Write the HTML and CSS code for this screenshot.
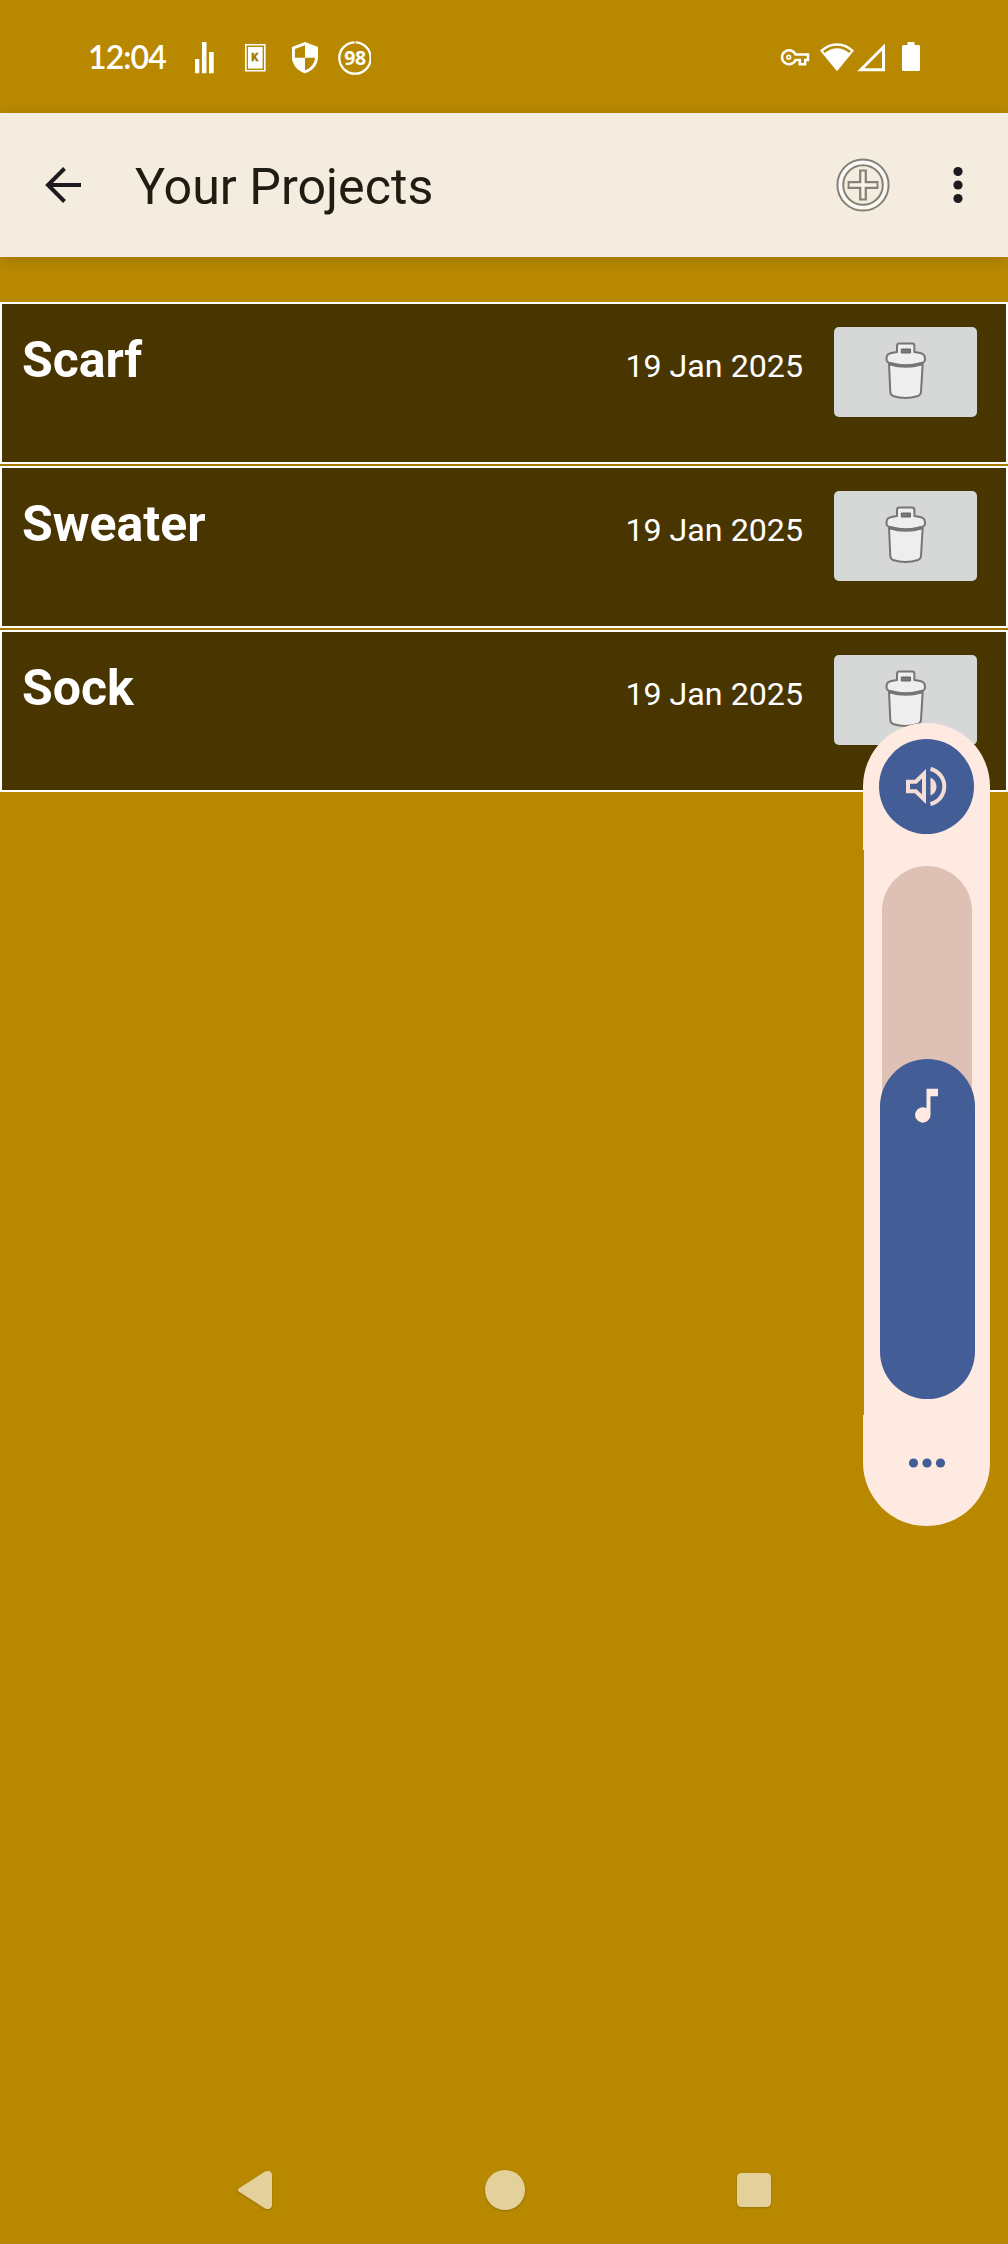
FILE: index.html
```html
<!DOCTYPE html>
<html lang="en">
<head>
<meta charset="utf-8">
<title>Your Projects</title>
<link rel="stylesheet" href="styles.css">
</head>
<body>
<svg class="defs" width="0" height="0">
  <symbol id="trash" viewBox="0 0 42 58">
    <g fill="#eee" stroke="#757575" stroke-width="2" stroke-linejoin="round">
      <path d="M4 22L5.300 50Q5.500 53 8 54Q20.500 58 33 54Q35.700 53 36 50L37.700 22Q20.500 26 4 22Z"/>
      <path d="M12 10V4Q12 1.600 14.400 1.600H27Q29.400 1.600 29.400 4V10Q36 10.700 38.500 12.500Q40.300 14 39.900 18.500Q39.500 20 37 21Q21 26 4.500 21Q2 20 1.700 18.500Q1 14 3 12.500Q5.500 10.700 12 10Z"/>
      <path d="M4.500 21.600Q21 26.500 37 21.600" fill="none" stroke-width="3.200"/>
    </g>
    <path d="M16.300 7H25.500V11H16.300Z" fill="#777" stroke="#666"/>
  </symbol>
</svg>
<div class="screen">
  <header class="status">
    <span class="clock">12:04</span>
    <svg class="notices" width="176" height="36" viewBox="195 40 176 36">
      <path fill="#fff" d="M195 59h4.300v14.300H195zM202 42h4.500v31.300H202zM209 52h4.700v21.300H209z"/>
      <path fill="none" stroke="#fff" stroke-width="1.600" d="M245.800 44.800h19v26h-19z"/>
      <path fill="#fff" d="M248 47h14.600v21.600H248z"/>
      <text class="key-letter" x="251.300" y="61.200">K</text>
      <path fill="#fff" d="M305 42l13 5v10.500c0 7-5.500 13.500-13 15.800c-7.500-2.300-13-8.800-13-15.800V47z"/>
      <path fill="#b88900" d="M305 45.200v12.500h-10.100V49zM305 57.700h10.100c-.5 5.800-4.500 10.800-10.100 12.600z"/>
      <circle cx="355" cy="58" r="15.700" fill="none" stroke="#fff" stroke-width="2.300"/>
      <path d="M355 40v5" stroke="#b88900" stroke-width="1"/>
      <text class="level" x="355" y="65.200" text-anchor="middle">98</text>
    </svg>
    <svg class="system" width="142" height="36" viewBox="780 40 142 36">
      <g fill="none" stroke="#fff" stroke-width="2.500">
        <path d="M795.500 54.600H808v5.400h-2.800v4.200h-5.400v-4.200h-4.300a7 7 0 1 1 0-5.400z"/>
        <path d="M883.500 47v22.700h-22.700z" stroke-width="3"/>
      </g>
      <circle cx="788.700" cy="57.200" r="2.600" fill="#fff"/>
      <circle cx="788.700" cy="57.200" r="1" fill="#b88900"/>
      <path fill="#fff" d="M837 71.300L820 50.500q7.500-7.300 17-7.300t17 7.300z"/>
      <path fill="none" stroke="#b88900" stroke-width="2.500" d="M823.900 52q6-5.100 13.100-5.100t13.100 5.100"/>
      <path fill="#fff" d="M907.500 42h7v3h4q1.500 0 1.500 1.500v23q0 1.500-1.500 1.500h-15q-1.500 0-1.500-1.500v-23q0-1.500 1.500-1.500h4z"/>
    </svg>
  </header>

  <div class="appbar">
    <svg class="back" width="38" height="38" viewBox="0 0 38 38"><path d="M37 19H4M20.500 2.500L4 19l16.500 16.500" fill="none" stroke="#1d1b20" stroke-width="4"/></svg>
    <h1 class="title">Your Projects</h1>
    <svg class="add" width="54" height="54" viewBox="0 0 54 54">
      <g fill="none">
        <circle cx="27" cy="27" r="22.700" stroke="#858177" stroke-width="7.800"/>
        <circle cx="27" cy="27" r="22.700" stroke="#fbf9f3" stroke-width="3.800"/>
        <path d="M27 15.500v23M15.500 27h23" stroke="#858177" stroke-width="7.800" stroke-linecap="square"/>
        <path d="M27 13.500v27M13.500 27h27" stroke="#f8f4ea" stroke-width="3.300"/>
      </g>
    </svg>
    <svg class="more" width="10" height="38" viewBox="0 0 10 38"><g fill="#1d1b20"><circle cx="5" cy="5.500" r="4.600"/><circle cx="5" cy="19" r="4.600"/><circle cx="5" cy="32.500" r="4.600"/></g></svg>
  </div>

  <main class="projects">
    <div class="project"><span class="name">Scarf</span><span class="date">19 Jan 2025</span><button class="delete" aria-label="Delete"><svg width="42" height="58"><use href="#trash"/></svg></button></div>
    <div class="project"><span class="name">Sweater</span><span class="date">19 Jan 2025</span><button class="delete" aria-label="Delete"><svg width="42" height="58"><use href="#trash"/></svg></button></div>
    <div class="project"><span class="name">Sock</span><span class="date">19 Jan 2025</span><button class="delete" aria-label="Delete"><svg width="42" height="58"><use href="#trash"/></svg></button></div>
  </main>

  <footer class="navbar">
    <svg width="36" height="40" viewBox="0 0 36 40"><path d="M2 18.200L28 1.500Q34.500-.5 35 5V35Q34.500 40.500 28 38.500L2 21.800Q0 20 2 18.200Z"/></svg>
    <svg width="40" height="40" viewBox="0 0 40 40"><circle cx="20" cy="20" r="20"/></svg>
    <svg width="34" height="34" viewBox="0 0 34 34"><rect width="34" height="34" rx="4.500"/></svg>
  </footer>

  <aside class="volume">
    <div class="volume-cap top">
      <div class="ringer">
        <svg width="44" height="42" viewBox="905 765.500 44 42">
          <path fill="none" stroke="#f5ddd6" stroke-width="4" d="M908 781.200h7.800l8.200-8v25.600l-8.200-8H908z"/>
          <path fill="#f5ddd6" d="M930.500 777c8 3.500 8 15 0 18z"/>
          <path fill="none" stroke="#f5ddd6" stroke-width="4" d="M930.500 768.500a18 18 0 0 1 0 35"/>
        </svg>
      </div>
    </div>
    <div class="volume-mid">
      <div class="track">
        <div class="fill"><svg width="24" height="36" viewBox="916 1088 24 36"><path fill="#feeae1" d="M927.500 1088.700H939v7.600h-7.500v18.700a7.700 7.700 0 1 1-4-6.800z"/></svg></div>
      </div>
    </div>
    <div class="volume-cap bottom">
      <svg width="38" height="10" viewBox="0 0 38 10"><g fill="#435d97"><circle cx="5.500" cy="5" r="4.600"/><circle cx="19" cy="5" r="4.600"/><circle cx="32.500" cy="5" r="4.600"/></g></svg>
    </div>
  </aside>
</div>
</body>
</html>
```
FILE: styles.css
```css
* { box-sizing: border-box; }
body { margin: 0; background: #b88900; font-family: Roboto, sans-serif; }
svg { display: block; flex: none; }
.defs { position: absolute; }
.screen {
  position: relative;
  width: 1008px;
  height: 2244px;
  display: flex;
  flex-direction: column;
  overflow: hidden;
  background: #b88900;
}

.status {
  height: 113px;
  flex: none;
  display: flex;
  align-items: flex-start;
  padding: 40px 86px 0 88px;
}
.clock {
  width: 107px;
  color: #fff;
  font: 600 32px/34px Lato, sans-serif;
  letter-spacing: -0.9px;
  white-space: nowrap;
}
.system { margin-left: auto; }
.key-letter { font: 700 11px Roboto, sans-serif; fill: #a27800; stroke: #a27800; stroke-width: 0.5px; }
.level { font: 700 19.5px "Noto Sans", sans-serif; fill: #fff; letter-spacing: -0.3px; }

.appbar {
  height: 144px;
  flex: none;
  display: flex;
  align-items: center;
  padding: 0 45px 0 44px;
  background: #f4ecdf;
  box-shadow: 0 3px 14px rgba(0, 0, 0, 0.15);
}
.title {
  flex: 1;
  margin: 0 0 0 53px;
  padding-top: 4px;
  color: #1f1c13;
  font-size: 50.2px;
  line-height: 60px;
  font-weight: 400;
}
.more { margin-left: 63px; }

.projects {
  display: flex;
  flex-direction: column;
  gap: 2px;
  margin-top: 45px;
  background: #a57a00;
}
.project {
  height: 162px;
  display: flex;
  align-items: flex-start;
  padding: 23px 29px 0 20px;
  border: 2px solid #fff;
  background: #493500;
  color: #fff;
}
.name { flex: 1; font-size: 50px; line-height: 67px; font-weight: 700; }
.date { margin-right: 31px; font-size: 32.2px; line-height: 79px; }
.delete {
  width: 143px;
  height: 90px;
  display: flex;
  align-items: center;
  justify-content: center;
  padding: 0 0 2px 1px;
  border: 0;
  border-radius: 5px;
  background: #d6d8d7;
}

.navbar {
  height: 108px;
  margin-top: auto;
  display: flex;
  align-items: center;
  justify-content: space-between;
  padding: 0 237px;
  fill: #e3d09a;
}
.navbar svg { filter: drop-shadow(0 1px 1px rgba(0, 0, 0, 0.2)); }

.volume {
  position: absolute;
  left: 863px;
  top: 723px;
  width: 127px;
  height: 803px;
  display: flex;
  flex-direction: column;
}
.volume-cap { background: #feeae1; display: flex; justify-content: center; }
.top { height: 127px; padding: 16px 0 0 0; border-radius: 63.5px 63.5px 0 0; }
.ringer {
  width: 95px;
  height: 95px;
  display: flex;
  align-items: center;
  justify-content: center;
  border-radius: 50%;
  background: #435d97;
}
.volume-mid {
  height: 565px;
  margin-left: 1px;
  padding-top: 16px;
  display: flex;
  justify-content: center;
  background: #feeae1;
}
.track {
  width: 90px;
  height: 533px;
  display: flex;
  align-items: flex-end;
  justify-content: center;
  border-radius: 45px;
  background: #dfc0b4;
}
.fill {
  width: 95px;
  height: 340px;
  flex: none;
  display: flex;
  justify-content: center;
  padding-top: 29px;
  border-radius: 47.5px;
  background: #435d97;
}
.bottom { height: 111px; padding-top: 43px; border-radius: 0 0 63.5px 63.5px; }
```
